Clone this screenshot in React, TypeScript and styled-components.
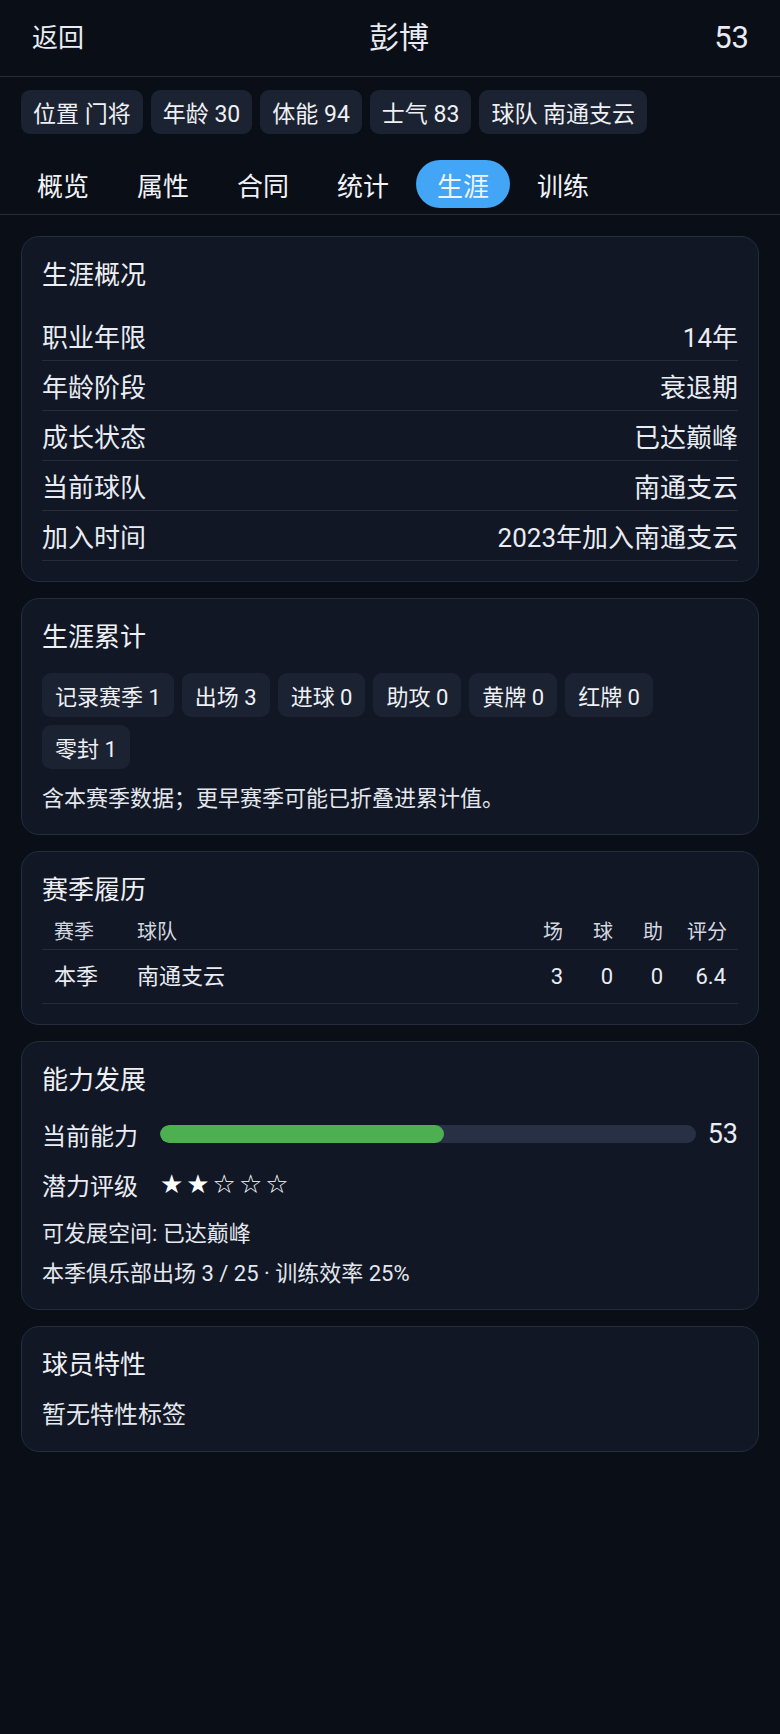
import React from "react";
import styled, { createGlobalStyle } from "styled-components";

const GlobalStyle = createGlobalStyle`
  html, body {
    margin: 0;
    padding: 0;
    background: #0a0e17;
  }
  body {
    font-family: "Roboto", "Noto Sans CJK SC", "Noto Sans", sans-serif;
    color: #e9ecf2;
  }
  * { box-sizing: border-box; }
`;

const Page = styled.div`
  min-height: 1734px;
  background: #0a0e17;
`;

const Header = styled.header`
  height: 77px;
  padding: 0 31px 0 32px;
  display: flex;
  align-items: center;
  justify-content: space-between;
  border-bottom: 1px solid #252c3b;
`;

const HeaderSide = styled.span<{ $size?: number }>`
  font-size: ${(p) => p.$size ?? 26}px;
  line-height: 36px;
`;

const HeaderTitle = styled.h1`
  margin: 0;
  font-size: 30px;
  font-weight: 400;
  line-height: 40px;
`;

const ChipRow = styled.div<{ $pad?: string }>`
  display: flex;
  flex-wrap: wrap;
  gap: 8px;
  padding: ${(p) => p.$pad || "0"};
`;

const Chip = styled.span<{ $size?: number; $padX?: number }>`
  height: 44px;
  display: inline-flex;
  align-items: center;
  padding: 0 ${(p) => p.$padX ?? 12}px;
  border-radius: 9px;
  background: #1b2231;
  font-size: ${(p) => p.$size ?? 22}px;
  color: #eef0f4;
  white-space: pre;
`;

const TabBar = styled.nav`
  margin-top: 16px;
  padding: 10px 16px 6px;
  display: flex;
  gap: 6px;
  border-bottom: 1px solid #252c3b;
`;

const Tab = styled.span<{ $active?: boolean }>`
  height: 48px;
  display: inline-flex;
  align-items: center;
  padding: 0 21px;
  border-radius: 24px;
  font-size: 26px;
  color: #f1f3f7;
  background: ${(p) => (p.$active ? "#42a5f5" : "transparent")};
`;

const Content = styled.main`
  padding: 21px 21px;
  display: flex;
  flex-direction: column;
  gap: 16px;
`;

const Card = styled.section`
  background: #111725;
  border: 1px solid #252c3c;
  border-radius: 18px;
  padding: 20px 20px;
`;

const CardTitle = styled.h2<{ $mb?: number }>`
  margin: 0 0 ${(p) => p.$mb ?? 18}px;
  font-size: 26px;
  font-weight: 400;
  line-height: 36px;
  color: #eef0f4;
`;

const InfoRow = styled.div`
  height: 50px;
  display: flex;
  align-items: center;
  justify-content: space-between;
  border-bottom: 1px solid #252c3c;
  font-size: 26px;
`;

const Note = styled.p<{ $size?: number; $mt?: number; $lh?: number }>`
  margin: ${(p) => p.$mt ?? 0}px 0 0;
  font-size: ${(p) => p.$size ?? 22}px;
  line-height: ${(p) => p.$lh ?? 30}px;
  color: #e4e7ed;
`;

const Table = styled.div`
  display: grid;
  grid-template-columns: 83px 1fr 50px 50px 50px 63px;
`;

const Cell = styled.div<{ $head?: boolean; $right?: boolean }>`
  padding: ${(p) => (p.$head ? "8px 12px 7px" : "14px 12px 13px")};
  font-size: ${(p) => (p.$head ? 20 : 22)}px;
  line-height: ${(p) => (p.$head ? 20 : 26)}px;
  color: ${(p) => (p.$head ? "#d4d8e0" : "#e9ecf2")};
  text-align: ${(p) => (p.$right ? "right" : "left")};
  border-bottom: 1px solid #252c3c;
  white-space: nowrap;
`;

const StatRow = styled.div<{ $mt?: number }>`
  display: grid;
  grid-template-columns: auto 1fr auto;
  align-items: center;
  column-gap: 22px;
  margin-top: ${(p) => p.$mt ?? 0}px;
  height: 36px;
  font-size: 24px;
`;

const StatLabel = styled.span`
  font-size: 24px;
`;

const Track = styled.div`
  height: 18px;
  border-radius: 9px;
  background: #283046;
  overflow: hidden;
  margin-right: -10px;
`;

const Fill = styled.div`
  height: 100%;
  border-radius: 9px;
  background: #4caf50;
`;

const StatValue = styled.span`
  font-size: 27px;
`;

const Stars = styled.span`
  font-size: 26px;
  letter-spacing: 3px;
  color: #ffffff;
  font-family: "DejaVu Sans", sans-serif;
`;

const headerChips = ["位置 门将", "年龄 30", "体能 94", "士气 83", "球队 南通支云"];
const tabs = ["概览", "属性", "合同", "统计", "生涯", "训练"];
const overview: [string, string][] = [
  ["职业年限", "14年"],
  ["年龄阶段", "衰退期"],
  ["成长状态", "已达巅峰"],
  ["当前球队", "南通支云"],
  ["加入时间", "2023年加入南通支云"],
];
const totals = ["记录赛季 1", "出场 3", "进球 0", "助攻 0", "黄牌 0", "红牌 0", "零封 1"];

export default function App() {
  const ability = 53;
  return (
    <Page>
      <GlobalStyle />
      <Header>
        <HeaderSide>返回</HeaderSide>
        <HeaderTitle>彭博</HeaderTitle>
        <HeaderSide $size={31}>53</HeaderSide>
      </Header>
      <ChipRow $pad="13px 21px 0">
        {headerChips.map((c) => (
          <Chip key={c} $size={23}>
            {c}
          </Chip>
        ))}
      </ChipRow>
      <TabBar>
        {tabs.map((t) => (
          <Tab key={t} $active={t === "生涯"}>
            {t}
          </Tab>
        ))}
      </TabBar>
      <Content>
        <Card>
          <CardTitle>生涯概况</CardTitle>
          {overview.map(([k, v]) => (
            <InfoRow key={k}>
              <span>{k}</span>
              <span>{v}</span>
            </InfoRow>
          ))}
        </Card>

        <Card>
          <CardTitle>生涯累计</CardTitle>
          <ChipRow>
            {totals.map((c) => (
              <Chip key={c} $padX={13}>
                {c}
              </Chip>
            ))}
          </ChipRow>
          <Note $mt={15}>含本赛季数据；更早赛季可能已折叠进累计值。</Note>
        </Card>

        <Card>
          <CardTitle $mb={6}>赛季履历</CardTitle>
          <Table>
            <Cell $head>赛季</Cell>
            <Cell $head>球队</Cell>
            <Cell $head $right>场</Cell>
            <Cell $head $right>球</Cell>
            <Cell $head $right>助</Cell>
            <Cell $head $right>评分</Cell>
            <Cell>本季</Cell>
            <Cell>南通支云</Cell>
            <Cell $right>3</Cell>
            <Cell $right>0</Cell>
            <Cell $right>0</Cell>
            <Cell $right>6.4</Cell>
          </Table>
        </Card>

        <Card>
          <CardTitle>能力发展</CardTitle>
          <StatRow>
            <StatLabel>当前能力</StatLabel>
            <Track>
              <Fill style={{ width: `${ability}%` }} />
            </Track>
            <StatValue>{ability}</StatValue>
          </StatRow>
          <StatRow $mt={14}>
            <StatLabel>潜力评级</StatLabel>
            <Stars>★★☆☆☆</Stars>
            <span />
          </StatRow>
          <Note $mt={17}>可发展空间: 已达巅峰</Note>
          <Note $mt={10}>本季俱乐部出场 3 / 25 · 训练效率 25%</Note>
        </Card>

        <Card>
          <CardTitle $mb={16}>球员特性</CardTitle>
          <Note $size={24} $lh={32}>
            暂无特性标签
          </Note>
        </Card>
      </Content>
    </Page>
  );
}
